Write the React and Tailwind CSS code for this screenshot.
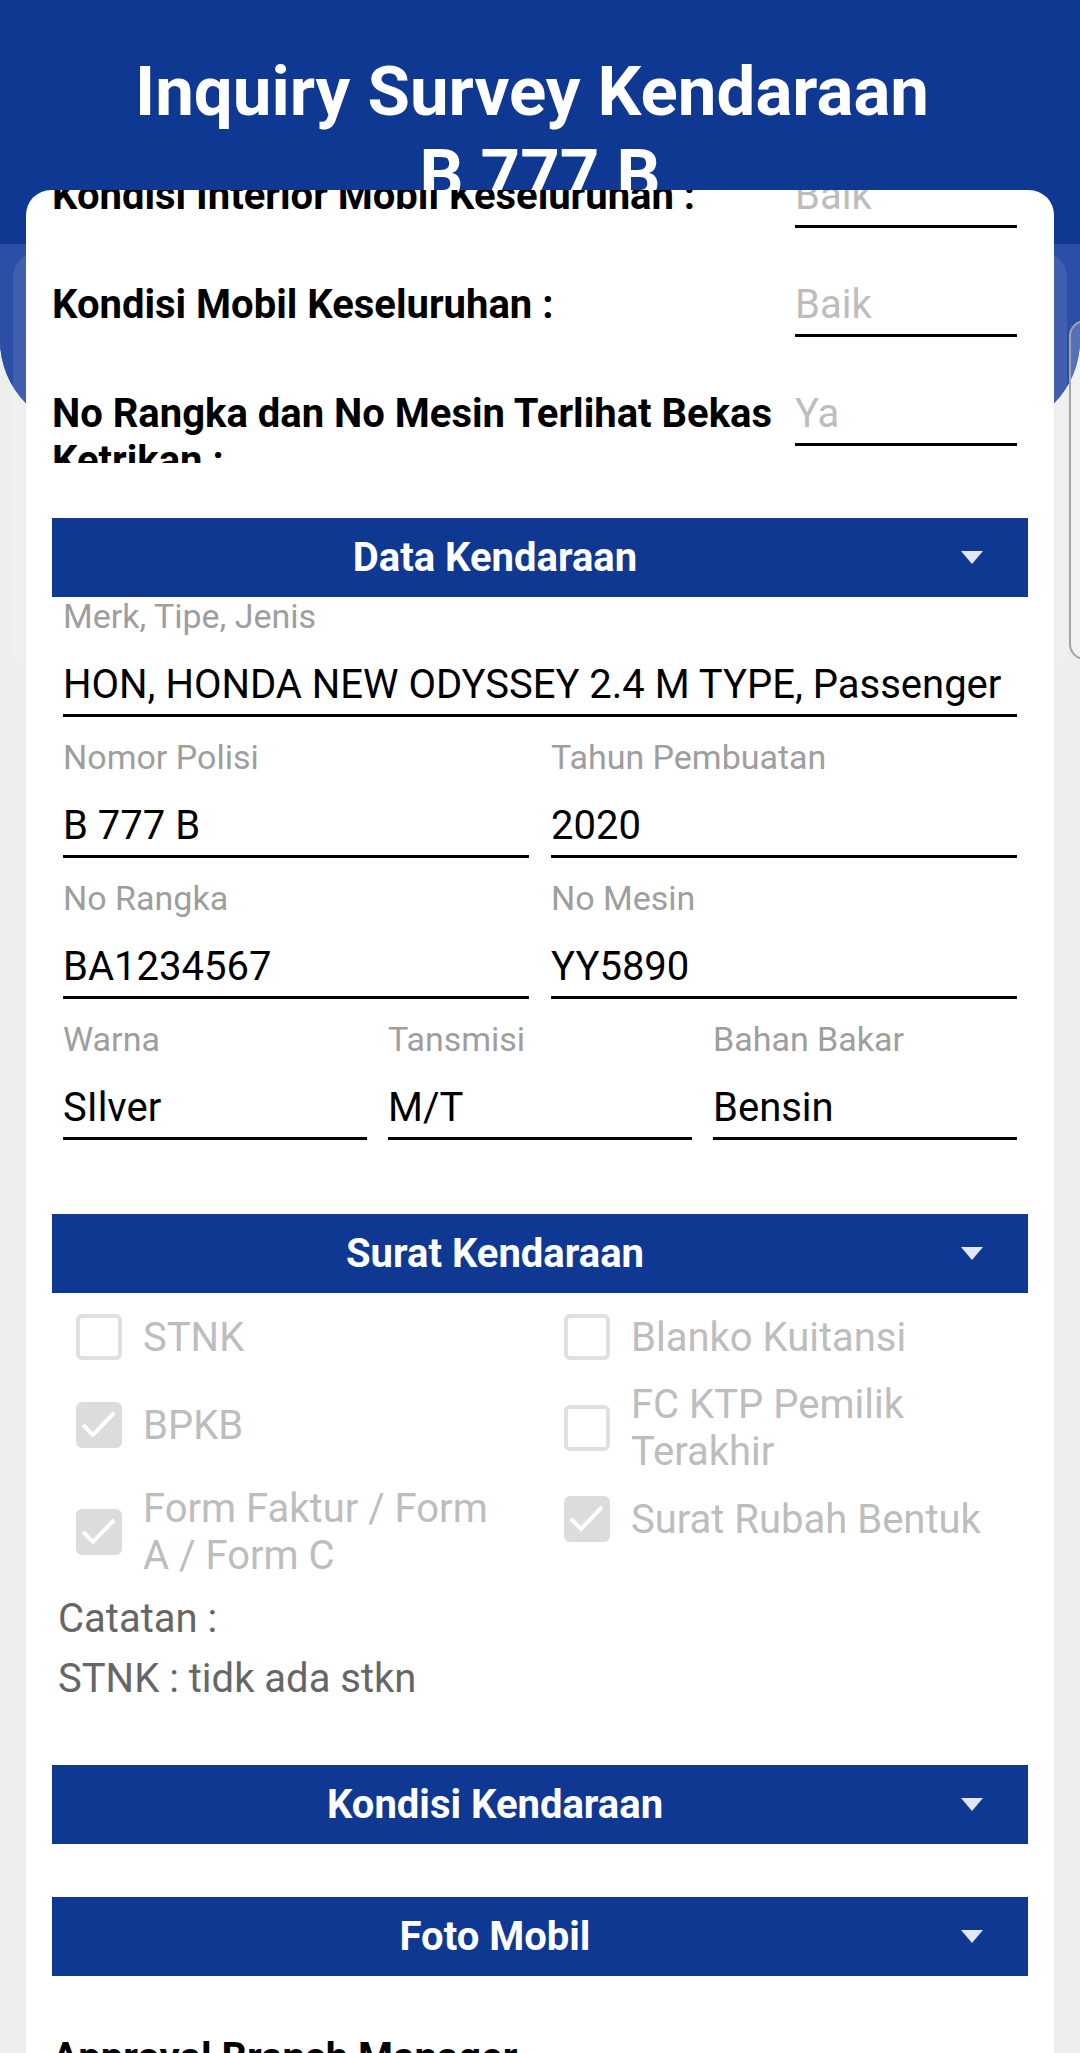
import React from "react";

const conditionRows = [
  { label: "Kondisi Interior Mobil Keseluruhan :", value: "Baik" },
  { label: "Kondisi Mobil Keseluruhan :", value: "Baik" },
  { label: "No Rangka dan No Mesin Terlihat Bekas Ketrikan :", value: "Ya" },
];

const documents = [
  { label: "STNK", checked: false },
  { label: "Blanko Kuitansi", checked: false },
  { label: "BPKB", checked: true },
  { label: "FC KTP Pemilik Terakhir", checked: false },
  { label: "Form Faktur / Form A / Form C", checked: true, shift: true },
  { label: "Surat Rubah Bentuk", checked: true },
];

function SectionBar({ title, className = "" }) {
  return (
    <div className={`flex h-[79px] items-center bg-[#0f3893] ${className}`}>
      <div className="flex-1 text-center text-[40px] font-bold leading-[47px] text-white">{title}</div>
      <div className="ml-[23px] mr-[45px] h-0 w-0 border-x-[11px] border-t-[13px] border-x-transparent border-t-[#e4e7f4]" />
    </div>
  );
}

function Field({ label, value }) {
  return (
    <div className="min-w-0">
      <div className="text-[34px] leading-[38px] text-[#9e9e9e]">{label}</div>
      <div className="mt-[27px] overflow-hidden whitespace-nowrap border-b-[3px] border-black pb-[7px] text-[40px] leading-[45px] text-black">
        {value}
      </div>
    </div>
  );
}

function CheckItem({ label, checked, shift }) {
  return (
    <div className={`flex min-h-[88px] items-center pr-[30px] ${shift ? "pt-[10px]" : ""}`}>
      {checked ? (
        <div className="ml-[24px] flex h-[46px] w-[46px] shrink-0 items-center justify-center rounded-[6px] bg-[#dcdcdc]">
          <svg width="46" height="46" viewBox="0 0 46 46">
            <polyline points="7,23 17,33 38,11" fill="none" stroke="white" strokeWidth="4" />
          </svg>
        </div>
      ) : (
        <div className="ml-[24px] h-[46px] w-[46px] shrink-0 rounded-[6px] border-[4px] border-[#e0e0e0]" />
      )}
      <div className="ml-[21px] text-[40px] leading-[47px] text-[#bdbdbd]">{label}</div>
    </div>
  );
}

export default function App() {
  return (
    <div className="relative h-[2053px] w-[1080px] overflow-hidden bg-[#eeeeee] font-['Roboto',sans-serif]">
      {/* header background layers */}
      <div className="absolute left-0 right-0 top-0 h-[430px] rounded-b-[90px] bg-[#0f3893]" />
      <div className="absolute left-0 right-0 top-[244px] h-[186px] rounded-b-[90px] bg-[#2b4ea6]" />
      <div className="absolute left-[13px] right-[13px] top-[253px] h-[420px] rounded-[24px] bg-white/10" />
      <div className="absolute left-[1069px] top-[320px] h-[340px] w-[60px] rounded-[16px] border-[2px] border-[#a3a3a3] bg-white/20" />

      <div className="relative h-[190px] pr-[16px] pt-[50px] text-center text-[69px] font-bold leading-[83px] text-white">
        <div>Inquiry Survey Kendaraan</div>
        <div className="pl-[16px]">B 777 B</div>
      </div>

      <div className="relative mx-[26px] h-[1863px] overflow-hidden rounded-t-[25px] bg-white px-[26px]">
        <div className="-mt-[18px] flex flex-col gap-[36px]">
          {conditionRows.map((row, idx) => (
            <div key={idx} className="flex h-[73px] items-start overflow-hidden pr-[11px]">
              <div className="flex-1 text-[40px] font-bold leading-[47px] text-black">{row.label}</div>
              <div className="w-[222px] border-b-[3px] border-black pb-[6px] text-[40px] leading-[47px] text-[#bdbdbd]">
                {row.value}
              </div>
            </div>
          ))}
        </div>

        <SectionBar title="Data Kendaraan" className="mt-[55px]" />
        <div className="flex flex-col gap-[21px] px-[11px]">
          <Field label="Merk, Tipe, Jenis" value="HON, HONDA NEW ODYSSEY 2.4 M TYPE, Passenger" />
          <div className="grid grid-cols-2 gap-x-[22px]">
            <Field label="Nomor Polisi" value="B 777 B" />
            <Field label="Tahun Pembuatan" value="2020" />
          </div>
          <div className="grid grid-cols-2 gap-x-[22px]">
            <Field label="No Rangka" value="BA1234567" />
            <Field label="No Mesin" value="YY5890" />
          </div>
          <div className="grid grid-cols-3 gap-x-[21px]">
            <Field label="Warna" value="SIlver" />
            <Field label="Tansmisi" value="M/T" />
            <Field label="Bahan Bakar" value="Bensin" />
          </div>
        </div>

        <SectionBar title="Surat Kendaraan" className="mt-[74px]" />
        <div className="grid grid-cols-2 items-start">
          {documents.map((doc) => (
            <CheckItem key={doc.label} label={doc.label} checked={doc.checked} shift={doc.shift} />
          ))}
        </div>
        <div className="mt-[10px] pl-[6px] text-[40px] leading-[60px] text-[#666666]">
          <div>Catatan :</div>
          <div>STNK : tidk ada stkn</div>
        </div>

        <SectionBar title="Kondisi Kendaraan" className="mt-[56px]" />
        <SectionBar title="Foto Mobil" className="mt-[53px]" />

        <div className="mt-[58px] text-[40px] font-bold leading-[47px] text-black">Approval Branch Manager</div>
      </div>
    </div>
  );
}
